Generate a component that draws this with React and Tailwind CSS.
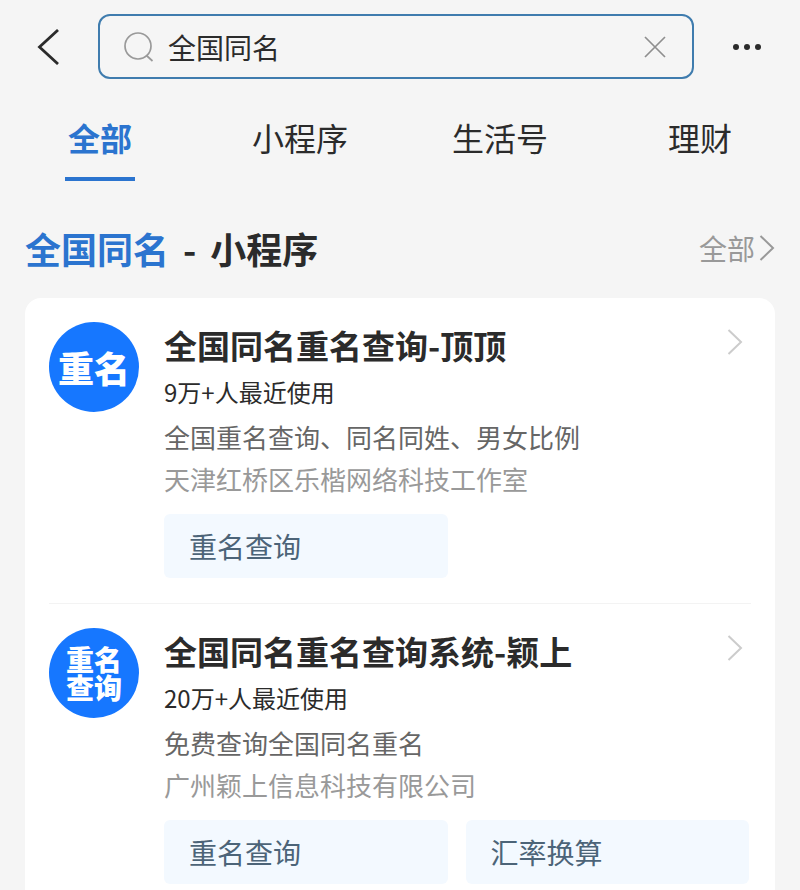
import { useState } from 'react';

const TABS = ['全部', '小程序', '生活号', '理财'];

const RESULTS = [
  {
    id: 1,
    logo: '重名',
    logoClass: 'text-[36px] leading-[36px]',
    title: '全国同名重名查询-顶顶',
    usage: '9万+人最近使用',
    description: '全国重名查询、同名同姓、男女比例',
    company: '天津红桥区乐楷网络科技工作室',
    services: ['重名查询'],
  },
  {
    id: 2,
    logo: '重名查询',
    logoClass: 'text-[28px] leading-[28px] w-14',
    title: '全国同名重名查询系统-颖上',
    usage: '20万+人最近使用',
    description: '免费查询全国同名重名',
    company: '广州颖上信息科技有限公司',
    services: ['重名查询', '汇率换算'],
  },
];

function Chevron({ className }) {
  return (
    <svg viewBox="0 0 16 26" fill="none" stroke="currentColor" strokeWidth="2"
      className={`w-4 h-[26px] shrink-0 ${className}`} aria-hidden="true">
      <path d="M1.5 1L14 13L1.5 25" />
    </svg>
  );
}

function SearchBar() {
  const [query, setQuery] = useState('全国同名');

  return (
    <header className="flex items-center pt-[14px] pl-9 pr-9">
      <button type="button" aria-label="返回" className="w-6 shrink-0 text-[#2b2b2b]">
        <svg viewBox="0 0 24 36" fill="none" stroke="currentColor" strokeWidth="2.8" className="w-6 h-9">
          <path d="M22 1L3.5 18L22 35" />
        </svg>
      </button>
      <div className="flex flex-1 min-w-0 items-center h-[65px] ml-[38px] pl-6 pr-6 border-2 border-[#3f7cae]
        rounded-xl">
        <svg viewBox="0 0 30 30" fill="none" stroke="#999999" strokeWidth="1.7" className="w-[30px] h-[30px] shrink-0"
          aria-hidden="true">
          <circle cx="14" cy="14" r="13" />
          <path d="M22.5 23.5L28.5 29" />
        </svg>
        <input
          type="text"
          aria-label="搜索"
          value={query}
          onChange={e => setQuery(e.target.value)}
          className="flex-1 min-w-0 ml-[14px] text-[28px] leading-[40px] text-[#2b2b2b] bg-transparent outline-none"
        />
        <button type="button" aria-label="清除" onClick={() => setQuery('')} className="shrink-0 text-[#8f8f8f]">
          <svg viewBox="0 0 24 24" fill="none" stroke="currentColor" strokeWidth="1.7" className="w-6 h-6">
            <path d="M1 2L21 22M21 2L1 22" />
          </svg>
        </button>
      </div>
      <button type="button" aria-label="更多" className="ml-[38px] w-8 shrink-0 text-[#2b2b2b]">
        <svg viewBox="0 0 32 8" fill="currentColor" className="w-8 h-2">
          <circle cx="4" cy="4" r="3" />
          <circle cx="15" cy="4" r="3" />
          <circle cx="26" cy="4" r="3" />
        </svg>
      </button>
    </header>
  );
}

function ResultItem({ item }) {
  return (
    <li className="flex gap-[25px] pt-6 pb-[25px] border-b border-[#f3f3f3] last:border-0 last:pb-1">
      <div className="flex items-center justify-center w-[90px] h-[90px] shrink-0 rounded-full bg-[#1677ff]
        text-white font-black">
        <span className={`break-all ${item.logoClass}`}>{item.logo}</span>
      </div>
      <div className="flex-1 min-w-0">
        <div className="flex items-start justify-between">
          <h3 className="text-[33px] leading-[46px] font-bold text-[#2b2b2b]">{item.title}</h3>
          <Chevron className="mt-[7px] mr-2 text-[#cccccc]" />
        </div>
        <p className="text-2xl leading-[48px] text-[#2b2b2b]">{item.usage}</p>
        <p className="text-[26px] leading-[42px] text-[#666666]">{item.description}</p>
        <p className="text-[26px] leading-[42px] text-[#999999]">{item.company}</p>
        <div className="grid grid-cols-2 gap-[18px] mt-[14px] pr-0.5">
          {item.services.map(s => (
            <button key={s} type="button"
              className="h-16 px-[25px] rounded-md bg-[#f3f9ff] text-left text-[28px] leading-[40px] text-[#4c6478]">
              {s}
            </button>
          ))}
        </div>
      </div>
    </li>
  );
}

export default function App() {
  const [tab, setTab] = useState('全部');

  return (
    <div className="flex flex-col min-h-screen bg-[#f5f5f5] font-['Noto_Sans_CJK_SC',sans-serif]">
      <SearchBar />

      <nav className="grid grid-cols-4 mt-[34px]">
        {TABS.map(t => (
          <button key={t} type="button" onClick={() => setTab(t)}
            className={`flex flex-col items-center gap-4 text-[32px] leading-[48px] ${
              t === tab ? 'font-bold text-[#2b74cf]' : 'text-[#2b2b2b]'
            }`}>
            {t}
            <span className={`w-[70px] h-1 ${t === tab ? 'bg-[#2b74cf]' : ''}`} />
          </button>
        ))}
      </nav>

      <main className="flex flex-col flex-1 px-[25px] pt-[41px]">
        <div className="flex items-center justify-between">
          <h2 className="flex gap-[14px] text-4xl leading-[52px] font-bold text-[#2b2b2b]">
            <span className="text-[#2b74cf]">全国同名</span>
            <span>-</span>
            <span>小程序</span>
          </h2>
          <a href="#all" className="flex items-center gap-1 text-[28px] leading-[40px] text-[#999999]">
            全部
            <Chevron className="text-[#999999]" />
          </a>
        </div>
        <ul className="flex-1 mt-6 px-6 rounded-t-2xl bg-white">
          {RESULTS.map(r => <ResultItem key={r.id} item={r} />)}
        </ul>
      </main>
    </div>
  );
}
